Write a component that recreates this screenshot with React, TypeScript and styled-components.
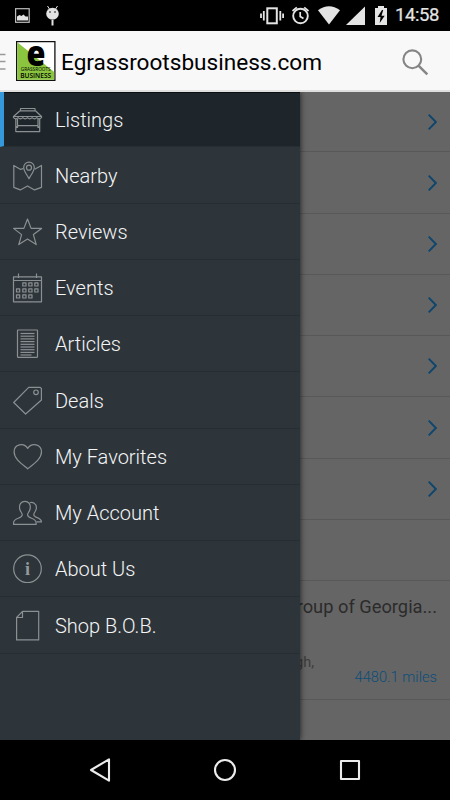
import React from "react";
import styled, { createGlobalStyle } from "styled-components";

const GlobalStyle = createGlobalStyle`
  * { box-sizing: border-box; }
  body { margin: 0; background: #000; font-family: Roboto, "Liberation Sans", sans-serif; }
  svg { display: block; flex: none; }
`;

const Screen = styled.div`
  width: 450px;
  height: 800px;
  display: flex;
  flex-direction: column;
  overflow: hidden;
  background: #000;
`;

const StatusBar = styled.div`
  height: 31px;
  flex: none;
  display: flex;
  align-items: center;
  justify-content: space-between;
  background: #000;
`;

const Clock = styled.span`
  width: 56px;
  padding-left: 1px;
  font-size: 18.5px;
  line-height: 33px;
  font-weight: 400;
  letter-spacing: -0.4px;
  -webkit-text-stroke: 0.2px #e4e4e4;
  color: #e4e4e4;
`;

const StatusRight = styled.div`
  display: flex;
  align-items: center;
`;

const Header = styled.header`
  height: 61px;
  flex: none;
  display: flex;
  align-items: center;
  background: #f8f8f8;
  border-bottom: 2px solid #dfdfdf;
`;

const Title = styled.h1`
  margin: 5px 0 0 5px;
  flex: 1;
  font-size: 22.6px;
  font-weight: 400;
  line-height: 30px;
  white-space: nowrap;
  color: #000;
`;

const Logo = styled.svg`
  margin-left: 10px;
`;

const LogoText = styled.text`
  font-family: "Open Sans", sans-serif;
  text-anchor: middle;
`;

const SearchIcon = styled.svg`
  margin: 3px 21px 0 0;
`;

const Content = styled.main`
  position: relative;
  height: 648px;
  flex: none;
  overflow: hidden;
  background: #656565;
`;

const ListRow = styled.div<{ $height?: number }>`
  height: ${(p) => p.$height ?? 61.25}px;
  display: flex;
  align-items: center;
  justify-content: flex-end;
  padding-right: 13px;
  border-bottom: 1px solid #585858;
`;

const DetailRow = styled.div`
  height: 119px;
  padding: 12px 13px 0 0;
  display: flex;
  flex-direction: column;
  border-bottom: 1px solid #585858;
`;

const DetailTitle = styled.div`
  align-self: flex-end;
  font-size: 18.3px;
  line-height: 28px;
  white-space: nowrap;
  color: #2b2b2b;
`;

const DetailMeta = styled.div`
  display: flex;
  justify-content: space-between;
  margin-top: 32px;
`;

const Place = styled.span`
  width: 314px;
  text-align: right;
  font-size: 14.5px;
  line-height: 20px;
  color: #3c3c3c;
`;

const Miles = styled.span`
  margin-top: 14px;
  font-size: 14.7px;
  font-weight: 300;
  line-height: 20px;
  color: #0d4d7a;
`;

const Drawer = styled.nav`
  position: absolute;
  top: 0;
  left: 0;
  width: 300px;
  height: 100%;
  background: #2d343a;
  box-shadow: 0 0 6px rgba(0, 0, 0, 0.75);
`;

const MenuItem = styled.div<{ $active?: boolean }>`
  height: ${(p) => (p.$active ? 55.3 : 56.25)}px;
  display: flex;
  align-items: center;
  gap: 11px;
  padding-top: 1.6px;
  padding-left: ${(p) => (p.$active ? 8 : 12)}px;
  border-left: ${(p) => (p.$active ? "4px solid #3498db" : "0")};
  border-bottom: 1px solid #272e31;
  background: ${(p) => (p.$active ? "#1e252b" : "#2d343a")};
  box-shadow: ${(p) => (p.$active ? "inset 0 1px 0 #0b0f12" : "none")};
  color: #f4f5f5;
  font-size: 20px;
  font-weight: 300;
  line-height: 24px;
`;

const IconSvg = styled.svg`
  fill: none;
  stroke: #8b9092;
  stroke-width: 1.2;
  stroke-linejoin: round;
`;

const InfoLetter = styled.text`
  fill: #969a9c;
  stroke: none;
  font: bold 18px "Liberation Serif", serif;
  text-anchor: middle;
`;

const NavBar = styled.footer`
  height: 60px;
  flex: none;
  display: flex;
  align-items: center;
  justify-content: space-between;
  padding: 0 88px;
  background: #000;
`;

const NavIcon = styled.svg`
  fill: none;
  stroke: #ececec;
  stroke-width: 2.1;
  stroke-linejoin: round;
`;

const calendarDays = [
  [12.3, 12.3], [18.3, 12.3], [24.3, 12.3],
  [6, 18.3], [12.3, 18.3], [18.3, 18.3], [24.3, 18.3],
  [6, 24.3], [12.3, 24.3], [18.3, 24.3],
];

const articleLines = [5.5, 8.2, 10.9, 13.6, 16.3, 19, 21.7, 24.4];

const menu: { label: string; icon: React.ReactNode }[] = [
  {
    label: "Listings",
    icon: (
      <>
        <path d="M8.5 4.5h14.5v2.3H8.5zM8 6.8L1.5 12.5v1.2q2.3 2.4 4.6 0q2.4 2.4 4.7 0q2.3 2.4 4.7 0q2.3 2.4 4.6 0q2.4 2.4 4.7 0q2.3 2.4 4.7 0v-1.2L23.5 6.8M1.5 12.5h28" />
        <path d="M3.8 15v12.6h23.9V15M5.5 15v9M26 15v9M3.8 24l2.4-2.3h19.2l2.3 2.3" />
      </>
    ),
  },
  {
    label: "Nearby",
    icon: (
      <>
        <path d="M11.3 8.7L8.2 9.3L1.8 5.4v22l6.5 2.5l7.2-4l7 4l7-2.5v-22l-6.8 3.9" />
        <path d="M17 18.7C15 14.7 11.7 11 11.7 7.4a5.3 5.3 0 0 1 10.6 0c0 3.6-3.3 7.3-5.3 11.3z" />
        <circle cx="17" cy="7.7" r="2.5" />
      </>
    ),
  },
  {
    label: "Reviews",
    icon: <path d="M15.5 3l3.6 9.4h10.5l-8.2 6.2l2.8 10l-8.7-5.5l-8.7 5.5l2.8-10l-8-6.2h10.3z" />,
  },
  {
    label: "Events",
    icon: (
      <>
        <path d="M1.5 4.8h28v25h-28zM1.5 8.5h28M6.5 1.5v4.5M24.5 1.5v4.5" />
        {calendarDays.map(([x, y]) => (
          <rect key={`${x}-${y}`} x={x - 1.5} y={y - 1.5} width="3.2" height="3.2" />
        ))}
      </>
    ),
  },
  {
    label: "Articles",
    icon: (
      <>
        <rect x="5.5" y="2" width="20" height="27.3" rx="0.5" />
        {articleLines.map((y) => (
          <path key={y} d={`M8.5 ${y}h14`} />
        ))}
        <path d="M8.5 27h11" />
      </>
    ),
  },
  {
    label: "Deals",
    icon: (
      <>
        <path d="M1.7 17.5L16.7 2.3h11.5l1.2 1.2v11.5L13.6 29z" />
        <circle cx="24" cy="7.3" r="2.3" />
      </>
    ),
  },
  {
    label: "My Favorites",
    icon: <path d="M15.7 27.8C11 23.8 2.1 18.5 2.1 10.8c0-7.5 9.6-10 13.6-3.4c4-6.6 13.8-4.1 13.8 3.4c0 7.7-9.1 13-13.8 17z" />,
  },
  {
    label: "My Account",
    icon: (
      <>
        <path d="M10.2 18c.2-2-1.8-3-2.5-6c-.9-5 1.6-7.7 5.2-7.7s6.1 2.7 5.2 7.7c-.7 3-2.7 4-2.5 6c0 3.6 8.5 3 8.5 7.5v1.9H1.6v-1.9c0-4.5 8.6-3.9 8.6-7.5z" />
        <path d="M17.7 5.7c3-.9 6.7.6 6.7 5c0 4-2.6 4.4-2.6 7c0 3.4 7.7 2.4 7.7 7.2h-5" />
      </>
    ),
  },
  {
    label: "About Us",
    icon: (
      <>
        <circle cx="15.5" cy="15.7" r="13.8" />
        <InfoLetter x="15.5" y="21.7">i</InfoLetter>
      </>
    ),
  },
  {
    label: "Shop B.O.B.",
    icon: <path d="M10.5 1.3h16.2v28.6H4.6V7.5zM10.5 1.3v6.2H4.6" />,
  },
];

const Chevron = () => (
  <svg width="9" height="18" viewBox="0 0 9 18" fill="none" stroke="#0d456e" strokeWidth="1.9">
    <path d="M0.7 1.7l7.2 7.3l-7.2 7.3" />
  </svg>
);

export default function App() {
  return (
    <Screen>
      <GlobalStyle />
      <StatusBar>
        <svg width="70" height="31" viewBox="0 0 70 31" fill="#e2e2e2">
          <rect x="15.6" y="8.7" width="13.6" height="13.6" fill="none" stroke="#bdbdbd" strokeWidth="1.2" />
          <path d="M17 20.5v-4l2.5-1.5l2 1l2-1.5l2 2h2.5v4z" />
          <path d="M47.5 6l2 3.1M57.5 6l-2 3.1" stroke="#e2e2e2" strokeWidth="1" />
          <ellipse cx="52.5" cy="13.7" rx="6.3" ry="6" />
          <path d="M51.5 20h2v5.5h-2z" />
          <circle cx="50" cy="12" r=".8" fill="#000" />
          <circle cx="55" cy="12" r=".8" fill="#000" />
        </svg>
        <StatusRight>
          <svg width="134" height="31" viewBox="0 0 134 31" fill="#e4e4e4">
            <g fill="none" stroke="#e4e4e4">
              <rect x="7.3" y="8.3" width="9.5" height="15" strokeWidth="2" />
              <path d="M1 13.5v4.5M3.8 11v9.5M20.3 11v9.5M23.1 13.5v4.5" strokeWidth="1.8" />
              <circle cx="40.5" cy="16" r="7.3" strokeWidth="1.9" />
              <path d="M40.2 12v4.6l3.3 2M32.5 11l4.3-3.6M48.5 11l-4.3-3.6" strokeWidth="1.7" />
            </g>
            <path d="M58 10.2Q69 2.5 80 10.2L69 24.6z" />
            <path d="M86 25L105 6.5V25z" />
            <path d="M118 6h6v2h3v17h-12V8h3z" />
            <path d="M122 10l-4.5 7h3l-.8 6l5-7.2h-3.2l1.7-5.8z" fill="#000" />
          </svg>
          <Clock>14:58</Clock>
        </StatusRight>
      </StatusBar>
      <Header>
        <svg width="6" height="20" viewBox="0 0 6 20" stroke="#999" strokeWidth="1.3">
          <path d="M0 3.5h5.5M0 10.5h5.5M0 18h5.5" />
        </svg>
        <Logo width="40" height="40" viewBox="0 0 40 40">
          <rect x=".6" y=".6" width="38.3" height="38.8" fill="#fff" stroke="#101010" strokeWidth="1.3" />
          <path d="M1.3 1.3L38.2 31v7.7H1.3z" fill="#8bc53f" />
          <LogoText x="20" y="24.5" fontWeight="800" fontSize="35" textLength="19" lengthAdjust="spacingAndGlyphs">e</LogoText>
          <LogoText x="19.7" y="30.2" fontSize="5.6" textLength="30" lengthAdjust="spacingAndGlyphs">GRASSROOTS</LogoText>
          <LogoText x="19.7" y="37" fontWeight="600" fontSize="7.8" textLength="31" lengthAdjust="spacingAndGlyphs">BUSINESS</LogoText>
        </Logo>
        <Title>Egrassrootsbusiness.com</Title>
        <SearchIcon width="27" height="27" viewBox="0 0 27 27" fill="none" stroke="#858585" strokeWidth="2.1">
          <circle cx="10.3" cy="10.3" r="8.9" />
          <path d="M16.5 16.7l8.8 8.6" strokeWidth="2.5" />
        </SearchIcon>
      </Header>
      <Content>
        {Array.from({ length: 7 }, (_, i) => (
          <ListRow key={i} $height={i === 0 ? 60.4 : 61.25}>
            <Chevron />
          </ListRow>
        ))}
        <ListRow />
        <DetailRow>
          <DetailTitle>Group of Georgia...</DetailTitle>
          <DetailMeta>
            <Place>Raleigh,</Place>
            <Miles>4480.1 miles</Miles>
          </DetailMeta>
        </DetailRow>
        <Drawer>
          {menu.map((item, i) => (
            <MenuItem key={item.label} $active={i === 0}>
              <IconSvg width="32" height="32" viewBox="0 0 32 32">{item.icon}</IconSvg>
              {item.label}
            </MenuItem>
          ))}
        </Drawer>
      </Content>
      <NavBar>
        <NavIcon width="24" height="26" viewBox="0 0 24 26"><path d="M3 13L21 2.3v21.4z" /></NavIcon>
        <NavIcon width="24" height="26" viewBox="0 0 24 26"><circle cx="12" cy="13" r="10" /></NavIcon>
        <NavIcon width="24" height="26" viewBox="0 0 24 26"><rect x="3" y="4" width="18" height="18" /></NavIcon>
      </NavBar>
    </Screen>
  );
}
